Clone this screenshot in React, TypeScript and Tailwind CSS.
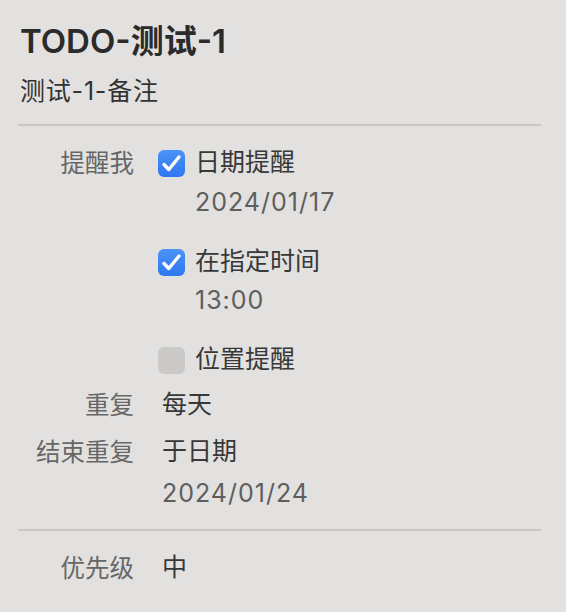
import React from "react";

const font = { fontFamily: '"Inter", "Noto Sans CJK SC", sans-serif' };

const Check = ({ on }: { on: boolean }) =>
  on ? (
    <div className="h-[27px] w-[27px] shrink-0 rounded-[6px] bg-gradient-to-b from-[#4b92f8] to-[#2f77ef]">
      <svg width="27" height="27" viewBox="0 0 27 27" fill="none">
        <path d="M6 14.5l4.8 5L21 7" stroke="#fff" strokeWidth="3.4" strokeLinecap="round" strokeLinejoin="round" />
      </svg>
    </div>
  ) : (
    <div className="h-[27px] w-[27px] shrink-0 rounded-[6px] bg-[#cac9c8]" />
  );

const Label = ({ children }: { children?: React.ReactNode }) => (
  <div className="flex h-[40px] items-center justify-end text-[24.5px] text-[#676767]">{children}</div>
);

export default function App() {
  return (
    <div className="h-[612px] w-[566px] overflow-hidden bg-[#e2e1e0] pl-[18px] pr-[25px] pt-[22px]" style={font}>
      <div className="flex h-[40px] items-center pl-[2px] text-[33px] font-semibold text-[#2b2b2b]">TODO-测试-1</div>
      <div className="mt-[10px] flex h-[40px] items-center pl-[2px] text-[25px] tracking-[0.8px] text-[#333]">测试-1-备注</div>
      <div className="mt-[12px] h-[2px] bg-[#c8c7c6]" />

      <div className="mt-[17px] grid grid-cols-[116px_1fr] gap-x-[24px]">
        <Label>提醒我</Label>
        <div>
          <div className="flex h-[40px] items-center gap-[10px]">
            <Check on />
            <span className="text-[25px] text-[#383838]">日期提醒</span>
          </div>
          <div className="flex h-[40px] items-center pl-[37px] text-[25px] tracking-[1px] text-[#5e5e5e]">2024/01/17</div>
          <div className="mt-[19px] flex h-[40px] items-center gap-[10px]">
            <Check on />
            <span className="text-[25px] text-[#383838]">在指定时间</span>
          </div>
          <div className="flex h-[38px] items-center pl-[37px] text-[25px] tracking-[1px] text-[#5e5e5e]">13:00</div>
          <div className="mt-[20px] flex h-[40px] items-center gap-[10px]">
            <Check on={false} />
            <span className="text-[25px] text-[#383838]">位置提醒</span>
          </div>
        </div>

        <div className="mt-[5px]">
          <Label>重复</Label>
        </div>
        <div className="mt-[5px] flex h-[40px] items-center pl-[4px] text-[25px] text-[#383838]">每天</div>

        <div className="mt-[7px]">
          <Label>结束重复</Label>
        </div>
        <div className="mt-[7px] pl-[4px]">
          <div className="flex h-[40px] items-center text-[25px] text-[#383838]">于日期</div>
          <div className="mt-[2px] flex h-[40px] items-center text-[25px] tracking-[1px] text-[#5e5e5e]">2024/01/24</div>
        </div>
      </div>

      <div className="mt-[15px] h-[2px] bg-[#c8c7c6]" />

      <div className="mt-[17px] grid grid-cols-[116px_1fr] gap-x-[24px]">
        <Label>优先级</Label>
        <div className="flex h-[40px] items-center pl-[4px] text-[25px] text-[#383838]">中</div>
      </div>
    </div>
  );
}
